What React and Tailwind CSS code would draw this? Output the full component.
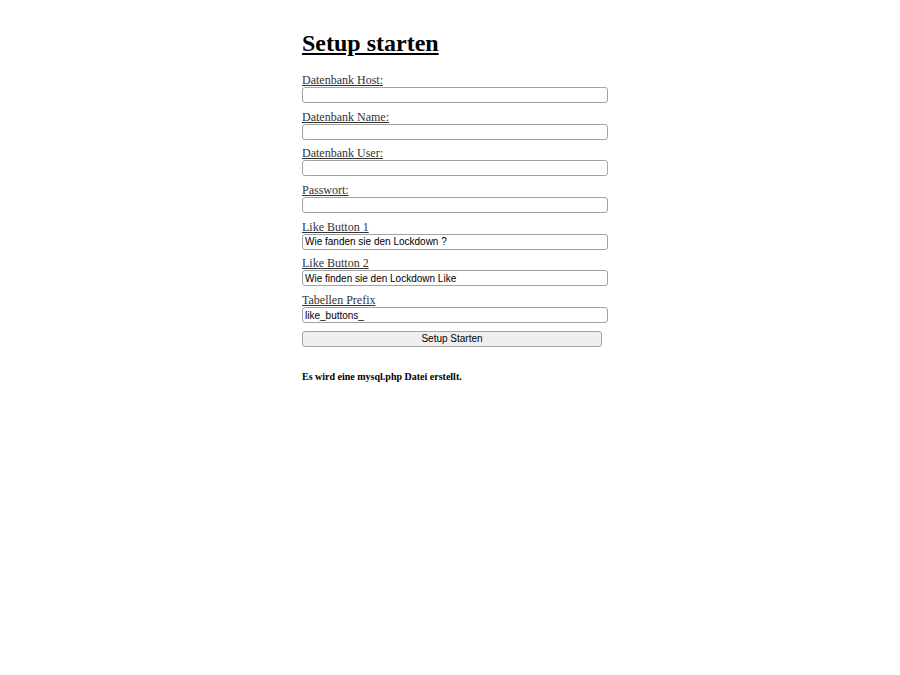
import React, { useState } from "react";

const fields = [
  { name: "host", label: "Datenbank Host:", value: "" },
  { name: "dbname", label: "Datenbank Name:", value: "" },
  { name: "user", label: "Datenbank User:", value: "" },
  { name: "pass", label: "Passwort:", value: "" },
  { name: "like1", label: "Like Button 1", value: "Wie fanden sie den Lockdown ?" },
  { name: "like2", label: "Like Button 2", value: "Wie finden sie den Lockdown Like" },
  { name: "prefix", label: "Tabellen Prefix", value: "like_buttons_" },
];

const App = () => {
  const [state, setState] = useState(
    Object.fromEntries(fields.map((f) => [f.name, f.value]))
  );

  const handleInputChange = (e) => {
    const { name, value } = e.target;
    setState({ ...state, [name]: value });
  };

  return (
    <div className="min-h-[675px] bg-white pl-[302px] font-['Liberation_Serif',serif] text-black">
      <h1 className="pt-[29px] text-[24px] font-bold leading-[28px] underline">
        Setup starten
      </h1>

      <form className="mt-[15px] flex w-[306px] flex-col" onSubmit={(e) => e.preventDefault()}>
        {fields.map((f) => (
          <div key={f.name} className="mb-[5.7px] flex flex-col">
            <label
              htmlFor={f.name}
              className="h-[15px] text-[12px] leading-[17px] text-[#333] underline"
            >
              {f.label}
            </label>
            <input
              id={f.name}
              name={f.name}
              type={f.name === "pass" ? "password" : "text"}
              value={state[f.name]}
              onChange={handleInputChange}
              className="h-[16px] w-[306px] rounded-[3px] border border-[#a3a3a3] bg-white px-[2px] font-['Liberation_Sans',Arial,sans-serif] text-[10px] leading-[14px] text-black outline-none"
            />
          </div>
        ))}

        <button
          type="submit"
          className="mt-[2px] h-[16px] w-[300px] rounded-[3px] border border-[#a3a3a3] bg-[#efefef] font-['Liberation_Sans',Arial,sans-serif] text-[10px] leading-[14px] text-black"
        >
          Setup Starten
        </button>
      </form>

      <h6 className="mt-[24px] text-[10px] font-bold leading-[12px]">
        Es wird eine mysql.php Datei erstellt.
      </h6>
    </div>
  );
};

export default App;
